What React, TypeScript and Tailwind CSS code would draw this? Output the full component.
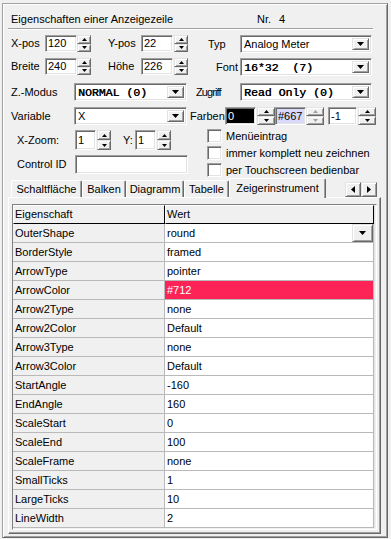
import React from 'react';

// ** win classic borders
const sunken =
  'border border-t-[#a0a0a0] border-l-[#a0a0a0] border-r-white border-b-white shadow-[inset_1px_1px_0_#696969,inset_-1px_-1px_0_#e3e3e3]';
const raised =
  'border border-t-[#e3e3e3] border-l-[#e3e3e3] border-r-[#696969] border-b-[#696969] shadow-[inset_1px_1px_0_#fff,inset_-1px_-1px_0_#a0a0a0] bg-[#f0f0f0]';

type Dir = 'up' | 'down' | 'left' | 'right';

const Tri = ({ dir, color = '#000', w = 5, h = 3 }: { dir: Dir; color?: string; w?: number; h?: number }) => {
  const pts: Record<Dir, string> = {
    up: `0,${h} ${w / 2},0 ${w},${h}`,
    down: `0,0 ${w},0 ${w / 2},${h}`,
    left: `${w},0 0,${h / 2} ${w},${h}`,
    right: `0,0 ${w},${h / 2} 0,${h}`,
  };
  return (
    <svg width={w} height={h} viewBox={`0 0 ${w} ${h}`} className="block">
      <polygon points={pts[dir]} fill={color} />
    </svg>
  );
};

const Spin = ({ className, disabled }: { className: string; disabled?: boolean }) => (
  <div className={`flex flex-col ${className}`}>
    <div className={`${raised} flex-1 flex items-center justify-center`}>
      <Tri dir="up" color={disabled ? '#a0a0a0' : '#000'} />
    </div>
    <div className={`${raised} flex-1 flex items-center justify-center`}>
      <Tri dir="down" color={disabled ? '#a0a0a0' : '#000'} />
    </div>
  </div>
);

const Input = ({ value, className }: { value: string; className: string }) => (
  <div className={`${sunken} bg-white flex items-center pl-[2px] ${className}`}>{value}</div>
);

const Combo = ({ text, mono, className }: { text: string; mono?: boolean; className: string }) => (
  <div className={`${sunken} bg-white flex items-center p-[2px] ${className}`}>
    <span
      className={`flex-1 pl-[1px] whitespace-pre ${
        mono ? "font-['Liberation_Mono',monospace] text-[11.5px] [text-shadow:0.4px_0_0_#000]" : ''
      }`}
    >
      {text}
    </span>
    <div className={`${raised} w-[17px] h-full flex items-center justify-center`}>
      <Tri dir="down" w={7} h={4} />
    </div>
  </div>
);

const Check = ({ label }: { label: string }) => (
  <div className="flex items-center h-[14px]">
    <div className={`${sunken} bg-white w-[15px] h-[14px]`} />
    <span className="ml-[4px]">{label}</span>
  </div>
);

const tabs = [
  { label: 'Schaltfläche', w: 'w-[71px]' },
  { label: 'Balken', w: 'w-[44px]' },
  { label: 'Diagramm', w: 'w-[58px]' },
  { label: 'Tabelle', w: 'w-[45px]' },
];

const rows: [string, string][] = [
  ['OuterShape', 'round'],
  ['BorderStyle', 'framed'],
  ['ArrowType', 'pointer'],
  ['ArrowColor', '#712'],
  ['Arrow2Type', 'none'],
  ['Arrow2Color', 'Default'],
  ['Arrow3Type', 'none'],
  ['Arrow3Color', 'Default'],
  ['StartAngle', '-160'],
  ['EndAngle', '160'],
  ['ScaleStart', '0'],
  ['ScaleEnd', '100'],
  ['ScaleFrame', 'none'],
  ['SmallTicks', '1'],
  ['LargeTicks', '10'],
  ['LineWidth', '2'],
];

export default function App() {
  return (
    <div className="w-[391px] h-[539px] bg-[#f0f0f0] overflow-hidden font-['Liberation_Sans',Arial,sans-serif] text-[11px] leading-[13px] text-black">
      <div className="ml-[2px] mt-[3px] w-[386px] h-[535px] border border-t-[#a0a0a0] border-l-[#a0a0a0] border-r-[#696969] border-b-[#696969] shadow-[inset_1px_1px_0_#fff,inset_-1px_-1px_0_#a0a0a0]">
        {/* Title */}
        <div className="ml-[5px] w-[365px] h-[25px] border-b border-[#a0a0a0] shadow-[0_1px_0_#fff] flex items-end pb-[2px] pl-[3px]">
          <span className="w-[246px]">Eigenschaften einer Anzeigezeile</span>
          <span>Nr.</span>
          <span className="ml-[8px]">4</span>
        </div>

        <div className="pl-[8px]">
          {/* Row 1 */}
          <div className="mt-[6px] h-[18px] flex items-start">
            <div className="w-[179px] flex items-center h-[17px]">
              <span className="w-[34px]">X-pos</span>
              <Input value="120" className="w-[32px] h-[17px]" />
              <Spin className="w-[14px] h-[17px]" />
              <span className="ml-[17px] w-[33px]">Y-pos</span>
              <Input value="22" className="w-[32px] h-[17px]" />
              <Spin className="ml-[1px] w-[14px] h-[17px]" />
            </div>
            <div className="w-[50px] pl-[18px] h-[18px] flex items-center">Typ</div>
            <Combo text="Analog Meter" className="w-[132px] h-[18px]" />
          </div>

          {/* Row 2 */}
          <div className="mt-[5px] h-[18px] flex items-start">
            <div className="w-[179px] flex items-center h-[17px]">
              <span className="w-[34px]">Breite</span>
              <Input value="240" className="w-[32px] h-[17px]" />
              <Spin className="w-[14px] h-[17px]" />
              <span className="ml-[17px] w-[33px]">Höhe</span>
              <Input value="226" className="w-[32px] h-[17px]" />
              <Spin className="ml-[1px] w-[14px] h-[17px]" />
            </div>
            <div className="w-[50px] pl-[26px] h-[18px] flex items-center">Font</div>
            <Combo text="16*32  (7)" mono className="w-[132px] h-[18px]" />
          </div>

          {/* Row 3 */}
          <div className="mt-[7px] h-[18px] flex items-center">
            <span className="w-[63px]">Z.-Modus</span>
            <Combo text="NORMAL (0)" mono className="w-[113px] h-[18px]" />
            <div className="ml-[3px] w-[50px] pl-[6px] tracking-[-0.9px]">Zugriff</div>
            <Combo text="Read Only (0)" mono className="w-[132px] h-[18px]" />
          </div>

          {/* Row 4 */}
          <div className="mt-[6px] h-[18px] flex items-center">
            <span className="w-[63px]">Variable</span>
            <Combo text="X" className="w-[113px] h-[18px]" />
            <span className="ml-[3px] w-[35px]">Farben</span>
            <Input value="0" className="w-[31px] h-[18px] !bg-black text-white" />
            <Spin className="ml-[1px] w-[18px] h-[18px]" />
            <Input value="#667" className="w-[31px] h-[18px] !bg-[#d9d9fb]" />
            <Spin disabled className="w-[18px] h-[18px]" />
            <Input value="-1" className="ml-[4px] w-[29px] h-[18px]" />
            <Spin className="ml-[1px] w-[18px] h-[18px]" />
          </div>

          {/* Row 5-6 */}
          <div className="mt-[4px] h-[48px] flex">
            <div className="w-[179px]">
              <div className="mt-[1px] h-[20px] flex items-center">
                <span className="w-[64px] pl-[6px]">X-Zoom:</span>
                <Input value="1" className="w-[21px] h-[20px]" />
                <Spin className="ml-[1px] w-[14px] h-[20px]" />
                <span className="ml-[12px] w-[12px]">Y:</span>
                <Input value="1" className="w-[21px] h-[20px]" />
                <Spin className="ml-[1px] w-[14px] h-[20px]" />
              </div>
              <div className="mt-[5px] h-[19px] flex items-center">
                <span className="w-[64px] pl-[6px]">Control ID</span>
                <Input value="" className="w-[113px] h-[19px]" />
              </div>
            </div>
            <div className="pl-[17px] flex flex-col gap-[3px]">
              <Check label="Menüeintrag" />
              <Check label="immer komplett neu zeichnen" />
              <Check label="per Touchscreen bedienbar" />
            </div>
          </div>
        </div>

        {/* Tabs */}
        <div className="relative z-10 mt-[1px] ml-[5px] w-[373px] h-[19px] flex items-end pl-[3px]">
          {tabs.map((t) => (
            <div
              key={t.label}
              className={`${t.w} h-[17px] rounded-t-[2px] border-t border-l border-r border-t-white border-l-white border-r-[#696969] shadow-[inset_-1px_0_0_#a0a0a0] flex items-center justify-center`}
            >
              {t.label}
            </div>
          ))}
          <div className="w-[97px] h-[20px] mb-[-1px] bg-[#f0f0f0] rounded-t-[2px] border-t border-l border-r border-t-white border-l-white border-r-[#696969] shadow-[inset_-1px_0_0_#a0a0a0] flex items-start justify-center pt-[3px]">
            Zeigerinstrument
          </div>
          <div className="ml-auto mr-[4px] self-start mt-[4px] flex">
            <div className={`${raised} w-[16px] h-[15px] flex items-center justify-center`}>
              <Tri dir="left" w={4} h={7} />
            </div>
            <div className={`${raised} w-[16px] h-[15px] flex items-center justify-center`}>
              <Tri dir="right" w={4} h={7} />
            </div>
          </div>
        </div>

        {/* Tab panel */}
        <div className="ml-[5px] w-[373px] h-[337px] border border-t-white border-l-white border-r-[#696969] border-b-[#696969] shadow-[inset_-1px_-1px_0_#a0a0a0] pt-[6px] pl-[3px]">
          <div className="w-[365px] h-[326px] border border-t-[#808080] border-l-[#808080] border-r-white border-b-white">
            <div className="w-[362px] border-r border-r-[#e3e3e3]">
              {/* Header */}
              <div className="flex h-[19px]">
                <div className="w-[152px] border-t border-l border-t-white border-l-white border-r border-b border-r-black border-b-black flex items-center pl-[1px]">
                  Eigenschaft
                </div>
                <div className="flex-1 border-t border-l border-t-white border-l-white border-r border-b border-r-black border-b-black flex items-center pl-[1px]">
                  Wert
                </div>
              </div>
              {/* Rows */}
              {rows.map(([k, v]) => (
                <div key={k} className="flex h-[19px] border-b border-[#b9b9b9]">
                  <div className="w-[152px] bg-[#f0f0f0] border-r border-[#b9b9b9] flex items-center pl-[2px]">{k}</div>
                  <div
                    className={`flex-1 flex items-center pl-[2px] border-r border-[#b9b9b9] ${
                      k === 'ArrowColor' ? 'bg-[#fe2356] text-white' : 'bg-white'
                    }`}
                  >
                    <span className="flex-1">{v}</span>
                    {k === 'OuterShape' && (
                      <div className={`${raised} w-[21px] h-full flex items-center justify-center`}>
                        <Tri dir="down" w={7} h={4} />
                      </div>
                    )}
                  </div>
                </div>
              ))}
            </div>
          </div>
        </div>
      </div>
    </div>
  );
}
